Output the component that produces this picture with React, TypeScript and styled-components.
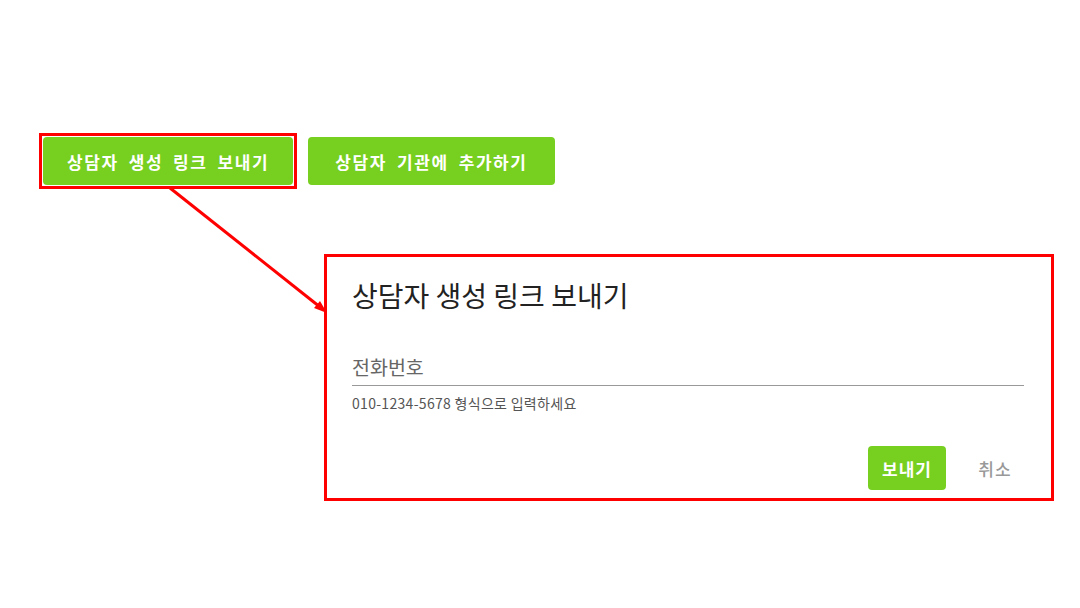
import styled, {createGlobalStyle} from 'styled-components';

const GlobalStyle = createGlobalStyle`
    html, body {
        margin: 0;
        padding: 0;
        background: #ffffff;
    }

    body {
        font-family: "Noto Sans CJK KR", "Noto Sans", sans-serif;
    }
`;

const colors = {
    green: '#77cf20',
    red: '#ff0000',
    title: '#222222',
    label: '#666666',
    helper: '#555555',
    line: '#999999',
    muted: '#999999',
};

const Page = styled.div`
    position: relative;
    width: 1080px;
    height: 608px;
    overflow: hidden;
    box-sizing: border-box;
    padding: 133px 0 0 39px;
`;

const Toolbar = styled.div`
    display: flex;
    align-items: center;
    gap: 11px;
`;

// red annotation frame drawn around the clicked button
const Highlight = styled.div`
    display: flex;
    border: 3px solid ${colors.red};
    padding: 1px;
`;

const GreenButton = styled.button<{ $wide?: boolean }>`
    height: 48px;
    padding: 0 ${({$wide}) => ($wide ? 27 : 24)}px;
    border: none;
    border-radius: 4px;
    background-color: ${colors.green};
    color: #ffffff;
    font-family: "Noto Sans CJK KR", sans-serif;
    font-size: 17px;
    font-weight: 700;
    letter-spacing: 1.6px;
    word-spacing: 4.5px;
    cursor: pointer;
`;

const Dialog = styled.div`
    margin: 65px 0 0 285px;
    width: 730px;
    height: 247px;
    box-sizing: border-box;
    border: 3px solid ${colors.red};
    padding: 21px 27px 0 25px;
    display: flex;
    flex-direction: column;
`;

const Title = styled.h2`
    margin: 0;
    font-size: 28px;
    line-height: 34px;
    font-weight: 400;
    color: ${colors.title};
`;

const Field = styled.div`
    margin-top: 43px;
    border-bottom: 1px solid ${colors.line};
    padding-bottom: 6px;
`;

const Label = styled.div`
    font-size: 19.5px;
    line-height: 24px;
    color: ${colors.label};
`;

const Helper = styled.div`
    margin-top: 8px;
    font-size: 14px;
    line-height: 18px;
    letter-spacing: 0.3px;
    color: ${colors.helper};
`;

const Actions = styled.div`
    margin-top: 34px;
    margin-right: -10px;
    display: flex;
    justify-content: flex-end;
    gap: 10px;
`;

const ActionButton = styled.button<{ $primary?: boolean }>`
    height: 44px;
    width: 78px;
    border: none;
    border-radius: 4px;
    background-color: ${({$primary}) => ($primary ? colors.green : 'transparent')};
    color: ${({$primary}) => ($primary ? '#ffffff' : colors.muted)};
    font-family: "Noto Sans CJK KR", sans-serif;
    font-size: 17px;
    font-weight: ${({$primary}) => ($primary ? 700 : 500)};
    letter-spacing: 1px;
    cursor: pointer;
`;

const Overlay = styled.svg`
    position: absolute;
    top: 0;
    left: 0;
    pointer-events: none;
`;

const App = () => {
    return (
        <Page>
            <GlobalStyle/>
            <Toolbar>
                <Highlight>
                    <GreenButton>상담자 생성 링크 보내기</GreenButton>
                </Highlight>
                <GreenButton $wide>상담자 기관에 추가하기</GreenButton>
            </Toolbar>
            <Dialog>
                <Title>상담자 생성 링크 보내기</Title>
                <Field>
                    <Label>전화번호</Label>
                </Field>
                <Helper>010-1234-5678 형식으로 입력하세요</Helper>
                <Actions>
                    <ActionButton $primary>보내기</ActionButton>
                    <ActionButton>취소</ActionButton>
                </Actions>
            </Dialog>
            <Overlay width={1080} height={608} viewBox="0 0 1080 608">
                <line x1={170} y1={188} x2={320} y2={307} stroke={colors.red} strokeWidth={3}/>
                <polygon points="327,313 314,308 320,301" fill={colors.red}/>
            </Overlay>
        </Page>
    );
};

export default App;
